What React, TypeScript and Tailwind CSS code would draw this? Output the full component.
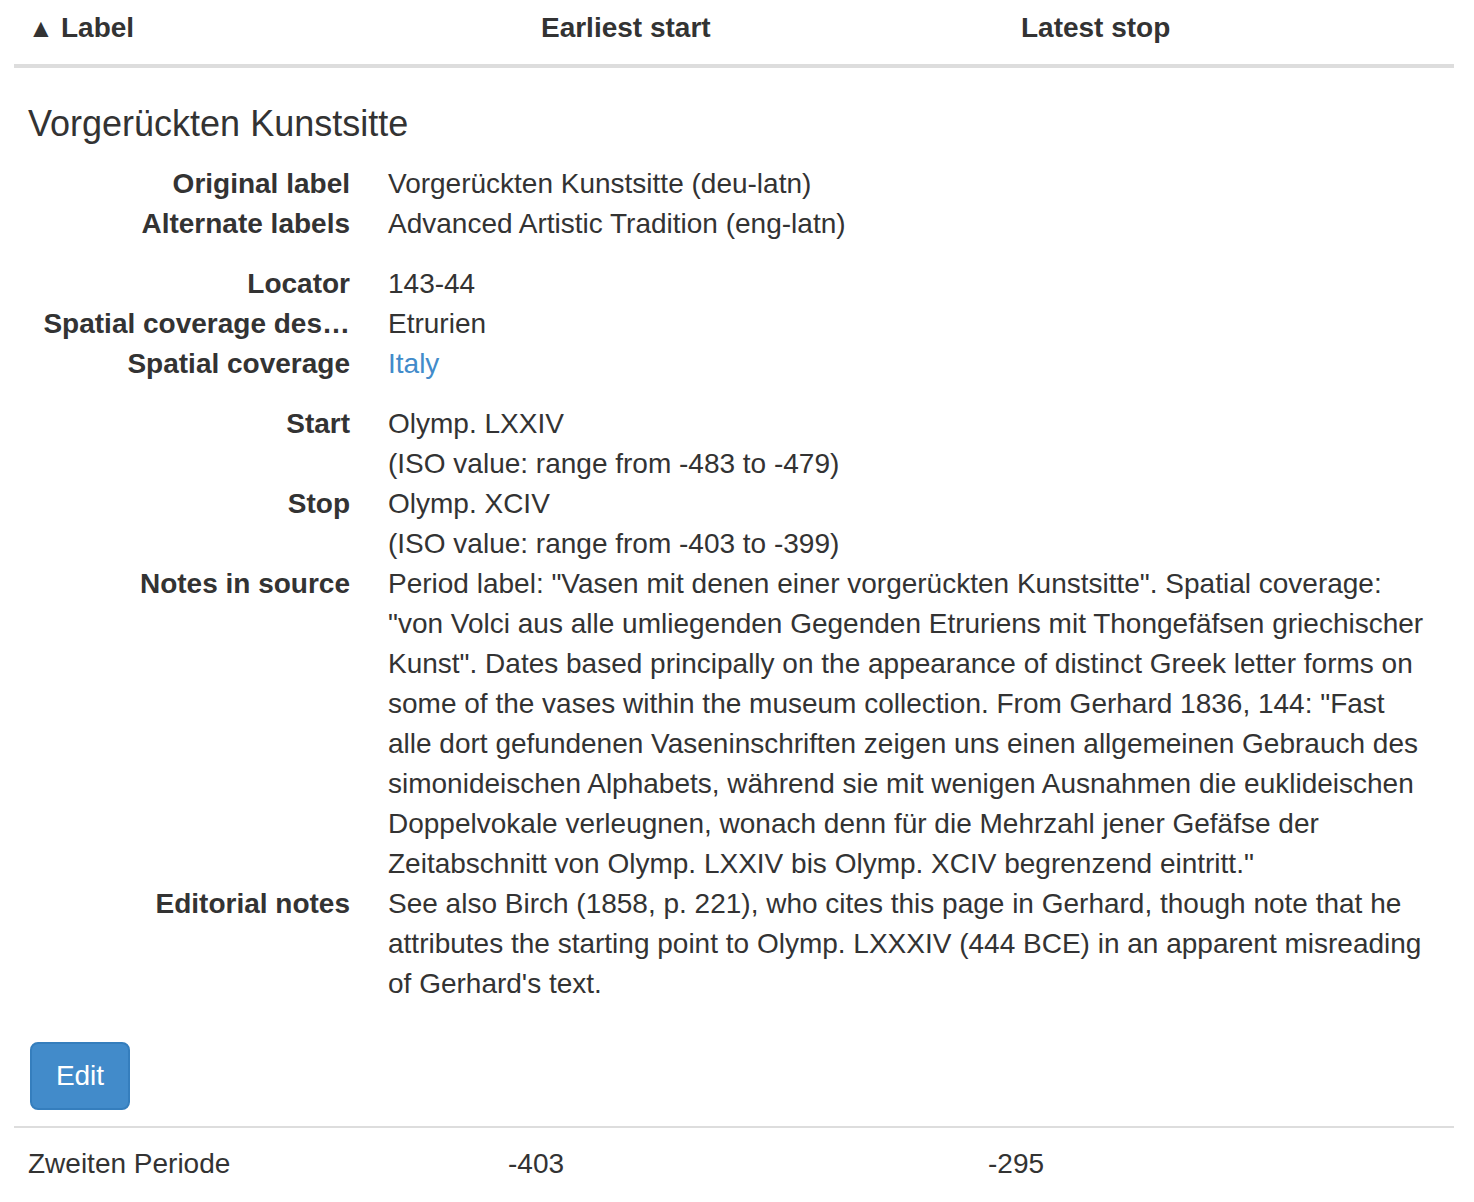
import React from 'react';

type Entry = { term: string; lines: React.ReactNode[] };

const groups: Entry[][] = [
  [
    { term: 'Original label', lines: ['Vorgerückten Kunstsitte (deu-latn)'] },
    { term: 'Alternate labels', lines: ['Advanced Artistic Tradition (eng-latn)'] },
  ],
  [
    { term: 'Locator', lines: ['143-44'] },
    { term: 'Spatial coverage des…', lines: ['Etrurien'] },
    {
      term: 'Spatial coverage',
      lines: [
        <a key="it" href="#" className="text-[#428bca]">
          Italy
        </a>,
      ],
    },
  ],
  [
    { term: 'Start', lines: ['Olymp. LXXIV', '(ISO value: range from -483 to -479)'] },
    { term: 'Stop', lines: ['Olymp. XCIV', '(ISO value: range from -403 to -399)'] },
    {
      term: 'Notes in source',
      lines: [
        'Period label: "Vasen mit denen einer vorgerückten Kunstsitte". Spatial coverage:',
        '"von Volci aus alle umliegenden Gegenden Etruriens mit Thongefäfsen griechischer',
        'Kunst". Dates based principally on the appearance of distinct Greek letter forms on',
        'some of the vases within the museum collection. From Gerhard 1836, 144: "Fast',
        'alle dort gefundenen Vaseninschriften zeigen uns einen allgemeinen Gebrauch des',
        'simonideischen Alphabets, während sie mit wenigen Ausnahmen die euklideischen',
        'Doppelvokale verleugnen, wonach denn für die Mehrzahl jener Gefäfse der',
        'Zeitabschnitt von Olymp. LXXIV bis Olymp. XCIV begrenzend eintritt."',
      ],
    },
    {
      term: 'Editorial notes',
      lines: [
        'See also Birch (1858, p. 221), who cites this page in Gerhard, though note that he',
        'attributes the starting point to Olymp. LXXXIV (444 BCE) in an apparent misreading',
        "of Gerhard's text.",
      ],
    },
  ],
];

const HeaderCell: React.FC<{ label: string; active?: boolean }> = ({ label, active }) => (
  <div className="pl-[14px] pr-4 pt-2 pb-4 font-bold">
    <span className={active ? 'text-[26px]' : 'invisible text-[26px]'}>▲ </span>
    {label}
  </div>
);

export default function App() {
  return (
    <div className="min-h-screen bg-white pl-[14px] font-['Liberation_Sans',Arial,sans-serif] text-[28px] leading-[40px] text-[#333]">
      <div className="w-[1440px]">
        <div className="grid grid-cols-3 border-b-4 border-[#ddd]">
          <HeaderCell label="Label" active />
          <HeaderCell label="Earliest start" />
          <HeaderCell label="Latest stop" />
        </div>

        <div className="border-b-2 border-[#ddd] py-4 pl-[14px] pr-4">
          <h4 className="mt-5 mb-5 text-[36px] leading-[40px] font-medium">Vorgerückten Kunstsitte</h4>
          <div className="flex flex-col gap-5">
            {groups.map((group, gi) => (
              <dl key={gi} className="grid grid-cols-[322px_1fr] gap-x-[38px]">
                {group.map((e) => (
                  <React.Fragment key={e.term}>
                    <dt className="whitespace-nowrap text-right font-bold">{e.term}</dt>
                    <dd>
                      {e.lines.map((l, i) => (
                        <span key={i} className="block whitespace-nowrap">
                          {l}
                        </span>
                      ))}
                    </dd>
                  </React.Fragment>
                ))}
              </dl>
            ))}
          </div>
          <button className="mt-[38px] ml-[2px] h-[68px] w-[100px] rounded-lg border-2 border-[#357ebd] bg-[#428bca] text-[28px] text-white">
            Edit
          </button>
        </div>

        <div className="grid grid-cols-3">
          <div className="py-4 pl-[14px] pr-4">Zweiten Periode</div>
          <div className="py-4 pl-[14px] pr-4">-403</div>
          <div className="py-4 pl-[14px] pr-4">-295</div>
        </div>
      </div>
    </div>
  );
}
